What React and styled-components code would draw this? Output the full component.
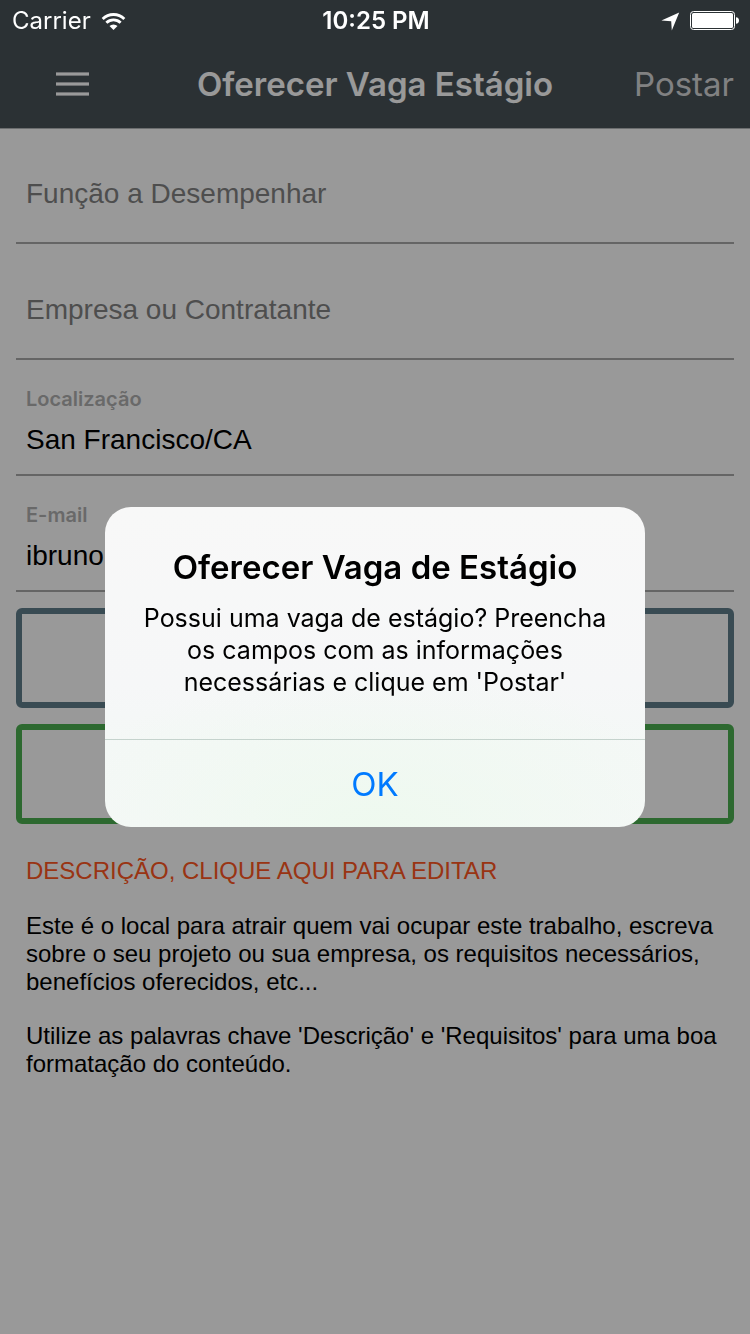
import React from "react";
import styled, { createGlobalStyle } from "styled-components";

const uiFont = `Inter, "Liberation Sans", sans-serif`;
const bodyFont = `"Liberation Sans", Arial, sans-serif`;

const GlobalStyle = createGlobalStyle`
  *, *::before, *::after { box-sizing: border-box; }
  body { margin: 0; background: #fff; font-family: ${bodyFont}; color: #000; }
`;

const Page = styled.div`
  min-height: 100vh;
  background: #fff;
`;

const Header = styled.header`
  background: #495257;
  box-shadow: 0 1px 0 #b4b7b9;
`;

/* The system bar stays bright above the dimming backdrop. */
const StatusBar = styled.div`
  position: relative;
  z-index: 2;
  display: grid;
  grid-template-columns: 1fr auto 1fr;
  align-items: center;
  height: 40px;
  padding: 2px 10px 0 12px;
  color: #fff;
  font: 400 24px/38px ${uiFont};
`;

const StatusGroup = styled.div`
  display: flex;
  align-items: center;
  gap: 10px;
  justify-content: ${({ $end }) => ($end ? "flex-end" : "flex-start")};
`;

const Clock = styled.time`
  font-weight: 600;
`;

const NavBar = styled.nav`
  display: grid;
  grid-template-columns: 1fr auto 1fr;
  align-items: center;
  height: 88px;
  padding: 0 16px;
  font-family: ${uiFont};
`;

const Title = styled.h1`
  margin: 0;
  color: #fff;
  font-size: 33px;
  font-weight: 600;
  line-height: 40px;
  text-align: center;
  white-space: nowrap;
`;

const BarButton = styled.button`
  justify-self: ${({ $end }) => ($end ? "end" : "start")};
  display: flex;
  padding: ${({ $end }) => ($end ? "4px 0" : "4px 40px")};
  border: 0;
  background: none;
  color: ${({ $end }) => ($end ? "#d7d8d9" : "#fff")};
  font: 400 33px/40px ${uiFont};
  cursor: pointer;
`;

const Form = styled.form`
  display: flex;
  flex-direction: column;
  padding: 0 16px;
`;

const FieldBox = styled.div`
  display: flex;
  flex-direction: column;
  height: 116px;
  padding: ${({ $filled }) => ($filled ? "27px" : "46px")} 10px 0;
  border-bottom: 2px solid #a9a9a9;
`;

const FieldLabel = styled.label`
  color: #b0b0b0;
  font: 600 20px/24px ${uiFont};
  margin-bottom: 9px;
`;

const FieldInput = styled.input`
  width: 100%;
  height: 40px;
  padding: 0;
  border: 0;
  outline: 0;
  background: none;
  color: #000;
  font: 400 28px/40px ${bodyFont};

  &::placeholder { color: #838383; opacity: 1; }
`;

const OutlineButton = styled.button`
  height: 100px;
  margin-top: 16px;
  border: 6px solid ${({ $tone }) => $tone};
  border-radius: 6px;
  background: none;
`;

const Description = styled.section`
  padding: 33px 26px;
  font-size: 24px;
  line-height: 28px;

  p { margin: 0 0 26px; }
`;

const DescriptionTitle = styled.h2`
  margin: 0 0 27px;
  color: #ff5722;
  font-size: 24px;
  font-weight: 400;
  line-height: 28px;
`;

const Backdrop = styled.div`
  position: fixed;
  inset: 0;
  z-index: 1;
  display: flex;
  align-items: center;
  justify-content: center;
  background: rgba(0, 0, 0, 0.4);
`;

const Dialog = styled.div`
  width: 540px;
  max-width: calc(100% - 32px);
  overflow: hidden;
  border-radius: 26px;
  background:
    radial-gradient(ellipse 60% 50% at 50% 100%, #eef9ef, rgba(238, 249, 239, 0)),
    linear-gradient(#f8f8f8, #f6f7f8 55%, #f4f8f6 75%, #f5f8f7);
  font-family: ${uiFont};
  text-align: center;
`;

const DialogBody = styled.div`
  padding: 40px 30px 41px;
`;

const DialogTitle = styled.h2`
  margin: 0 0 15px;
  font-size: 33px;
  font-weight: 600;
  line-height: 40px;
`;

const DialogText = styled.p`
  margin: 0;
  font-size: 25px;
  line-height: 32px;
`;

const DialogAction = styled.button`
  display: block;
  width: 100%;
  height: 88px;
  padding: 0;
  border: 0;
  border-top: 1px solid #c5d3cd;
  background: none;
  color: #007aff;
  font: 400 33px/88px ${uiFont};
  cursor: pointer;
`;

function WifiIcon() {
  return (
    <svg width="25" height="19" viewBox="0 0 26 20" fill="none" stroke="#fff" strokeWidth="3" aria-hidden="true">
      <path d="M1.6 7.3a16.2 16.2 0 0 1 22.8 0" />
      <path d="M5.5 11.4a10.7 10.7 0 0 1 15 0" />
      <path d="M13 19l-4.2-4.2a6 6 0 0 1 8.4 0z" fill="#fff" stroke="none" />
    </svg>
  );
}

function LocationIcon() {
  return (
    <svg width="19" height="19" viewBox="0 0 19 19" fill="#fff" aria-hidden="true">
      <path d="M18.2 0.5L10.8 18.6L10.2 9.2L0.4 8.6z" />
    </svg>
  );
}

function BatteryIcon() {
  return (
    <svg width="50" height="20" viewBox="0 0 50 20" aria-hidden="true">
      <rect x="0.5" y="0.5" width="44" height="18" rx="3" fill="none" stroke="#fff" />
      <rect x="2" y="2" width="41" height="15" rx="1.5" fill="#fff" />
      <path d="M46 6.200c2 0 3 1.500 3 3.300s-1 3.300-3 3.300z" fill="#fff" />
    </svg>
  );
}

function MenuIcon() {
  return (
    <svg width="33" height="24" viewBox="0 0 33 24" fill="currentColor" aria-hidden="true">
      <rect y="0.4" width="33" height="3.2" />
      <rect y="10.4" width="33" height="3.2" />
      <rect y="20.4" width="33" height="3.2" />
    </svg>
  );
}

function Field({ id, label, value, type = "text" }) {
  const filled = Boolean(value);
  return (
    <FieldBox $filled={filled}>
      {filled && <FieldLabel htmlFor={id}>{label}</FieldLabel>}
      <FieldInput
        id={id}
        type={type}
        defaultValue={value}
        placeholder={label}
        aria-label={filled ? undefined : label}
      />
    </FieldBox>
  );
}

export default function App() {
  return (
    <>
      <GlobalStyle />
      <Page>
        <Header>
          <StatusBar>
            <StatusGroup>
              <span>Carrier</span>
              <WifiIcon />
            </StatusGroup>
            <Clock>10:25 PM</Clock>
            <StatusGroup $end>
              <LocationIcon />
              <BatteryIcon />
            </StatusGroup>
          </StatusBar>
          <NavBar>
            <BarButton type="button" aria-label="Menu">
              <MenuIcon />
            </BarButton>
            <Title>Oferecer Vaga Estágio</Title>
            <BarButton type="submit" form="vaga" $end>
              Postar
            </BarButton>
          </NavBar>
        </Header>

        <main>
          <Form id="vaga" onSubmit={(event) => event.preventDefault()}>
            <Field id="funcao" label="Função a Desempenhar" />
            <Field id="empresa" label="Empresa ou Contratante" />
            <Field id="local" label="Localização" value="San Francisco/CA" />
            <Field id="email" label="E-mail" value="ibruno" />
            <OutlineButton type="button" $tone="#607d8b" />
            <OutlineButton type="button" $tone="#4caf50" />
          </Form>

          <Description>
            <DescriptionTitle>DESCRIÇÃO, CLIQUE AQUI PARA EDITAR</DescriptionTitle>
            <p>
              Este é o local para atrair quem vai ocupar este trabalho, escreva sobre o seu projeto ou sua
              empresa, os requisitos necessários, benefícios oferecidos, etc...
            </p>
            <p>
              Utilize as palavras chave 'Descrição' e 'Requisitos' para uma boa formatação do conteúdo.
            </p>
          </Description>
        </main>
      </Page>

      <Backdrop>
        <Dialog role="alertdialog" aria-modal="true" aria-labelledby="aviso-titulo" aria-describedby="aviso-texto">
          <DialogBody>
            <DialogTitle id="aviso-titulo">Oferecer Vaga de Estágio</DialogTitle>
            <DialogText id="aviso-texto">
              Possui uma vaga de estágio? Preencha os campos com as informações necessárias e clique em
              'Postar'
            </DialogText>
          </DialogBody>
          <DialogAction type="button">OK</DialogAction>
        </Dialog>
      </Backdrop>
    </>
  );
}
